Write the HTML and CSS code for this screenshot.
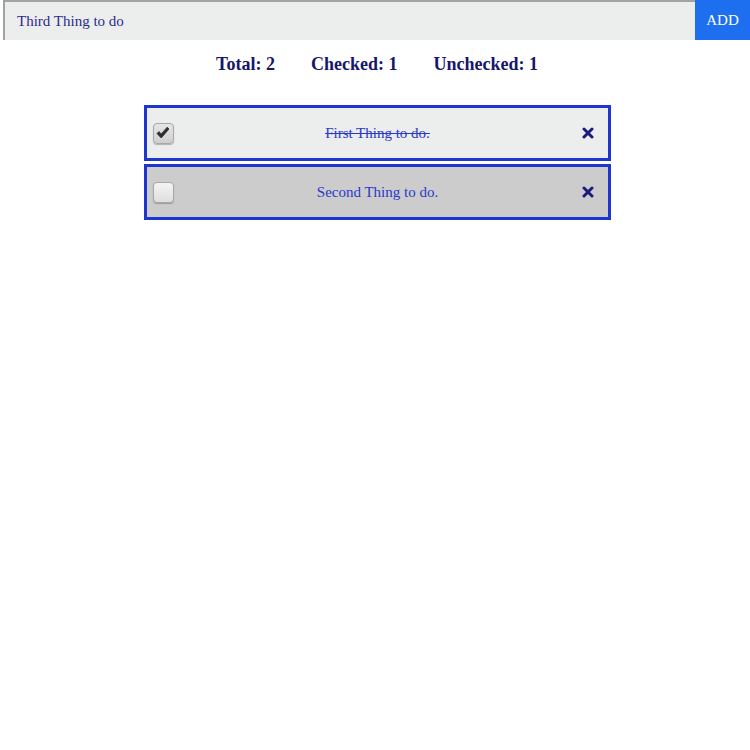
FILE: index.html
```html
<!DOCTYPE html>
<html>
<head>
<meta charset="utf-8">
<link rel="stylesheet" href="styles.css">
</head>
<body>
<form class="add-bar">
  <input class="add-input" type="text" value="Third Thing to do">
  <button class="add-btn" type="button">ADD</button>
</form>
<main class="content">
  <div class="stats">
    <span>Total: 2</span>
    <span>Checked: 1</span>
    <span>Unchecked: 1</span>
  </div>
  <ul class="list">
    <li class="item done">
      <span class="check checked"><svg viewBox="0 0 14 14" width="14" height="14"><path d="M1 7.6 L3 5.6 L5.2 8 L11.2 1.2 L13 3 L5.2 12 Z" fill="#2e2e2e" stroke="#2e2e2e" stroke-width="0.8" stroke-linejoin="round"/></svg></span>
      <span class="label">First Thing to do.</span>
      <span class="del"><svg viewBox="0 0 12 12" width="12" height="12"><path d="M2 2 L10 10 M10 2 L2 10" stroke="#1b1b7a" stroke-width="3" stroke-linecap="round"/></svg></span>
    </li>
    <li class="item todo">
      <span class="check"></span>
      <span class="label">Second Thing to do.</span>
      <span class="del"><svg viewBox="0 0 12 12" width="12" height="12"><path d="M2 2 L10 10 M10 2 L2 10" stroke="#1b1b7a" stroke-width="3" stroke-linecap="round"/></svg></span>
    </li>
  </ul>
</main>
</body>
</html>
```
FILE: styles.css
```css
html, body {
  margin: 0;
  padding: 0;
  background: #fff;
  font-family: "Liberation Serif", "Times New Roman", serif;
}
.add-bar {
  display: flex;
  height: 40px;
  margin: 0 0 0 3px;
}
.add-input {
  flex: 1;
  box-sizing: border-box;
  height: 40px;
  margin: 0;
  border: none;
  border-top: 2px solid #a2a2a2;
  border-left: 2px solid #a2a2a2;
  background: #eceeed;
  padding: 0 0 0 12px;
  font-family: "Liberation Serif", serif;
  font-size: 15px;
  color: #2a2a8c;
  outline: none;
}
.add-btn {
  width: 55px;
  height: 40px;
  margin: 0;
  border: none;
  background: #1e6ef0;
  color: #fff;
  font-family: "Liberation Serif", serif;
  font-size: 15px;
  padding: 0;
}
.content {
  padding-left: 4px;
}
.stats {
  display: flex;
  justify-content: center;
  gap: 36px;
  margin-top: 12px;
  font-weight: bold;
  font-size: 18px;
  color: #16166b;
  line-height: 24px;
}
.list {
  list-style: none;
  width: 467px;
  margin: 29px auto 0;
  padding: 0;
  display: flex;
  flex-direction: column;
  gap: 3px;
}
.item {
  box-sizing: border-box;
  height: 56px;
  border: 3px solid #1f35cf;
  display: flex;
  align-items: center;
  padding: 0 14px 0 6px;
}
.done { background: #eceeed; }
.todo { background: #cccccc; }
.check {
  box-sizing: border-box;
  width: 21px;
  height: 21px;
  border: 1px solid #a8a8a8;
  border-radius: 4px;
  background: linear-gradient(#f4f4f4, #dedede);
  box-shadow: 0 1px 1px rgba(0,0,0,0.25);
  display: flex;
  align-items: center;
  justify-content: center;
}
.check.checked { background: linear-gradient(#e6e6e6, #cfcfcf); }
.label {
  flex: 1;
  text-align: center;
  font-size: 15px;
  color: #2a38c8;
}
.done .label { text-decoration: line-through; }
.del {
  display: flex;
  width: 12px;
  height: 12px;
}
```
